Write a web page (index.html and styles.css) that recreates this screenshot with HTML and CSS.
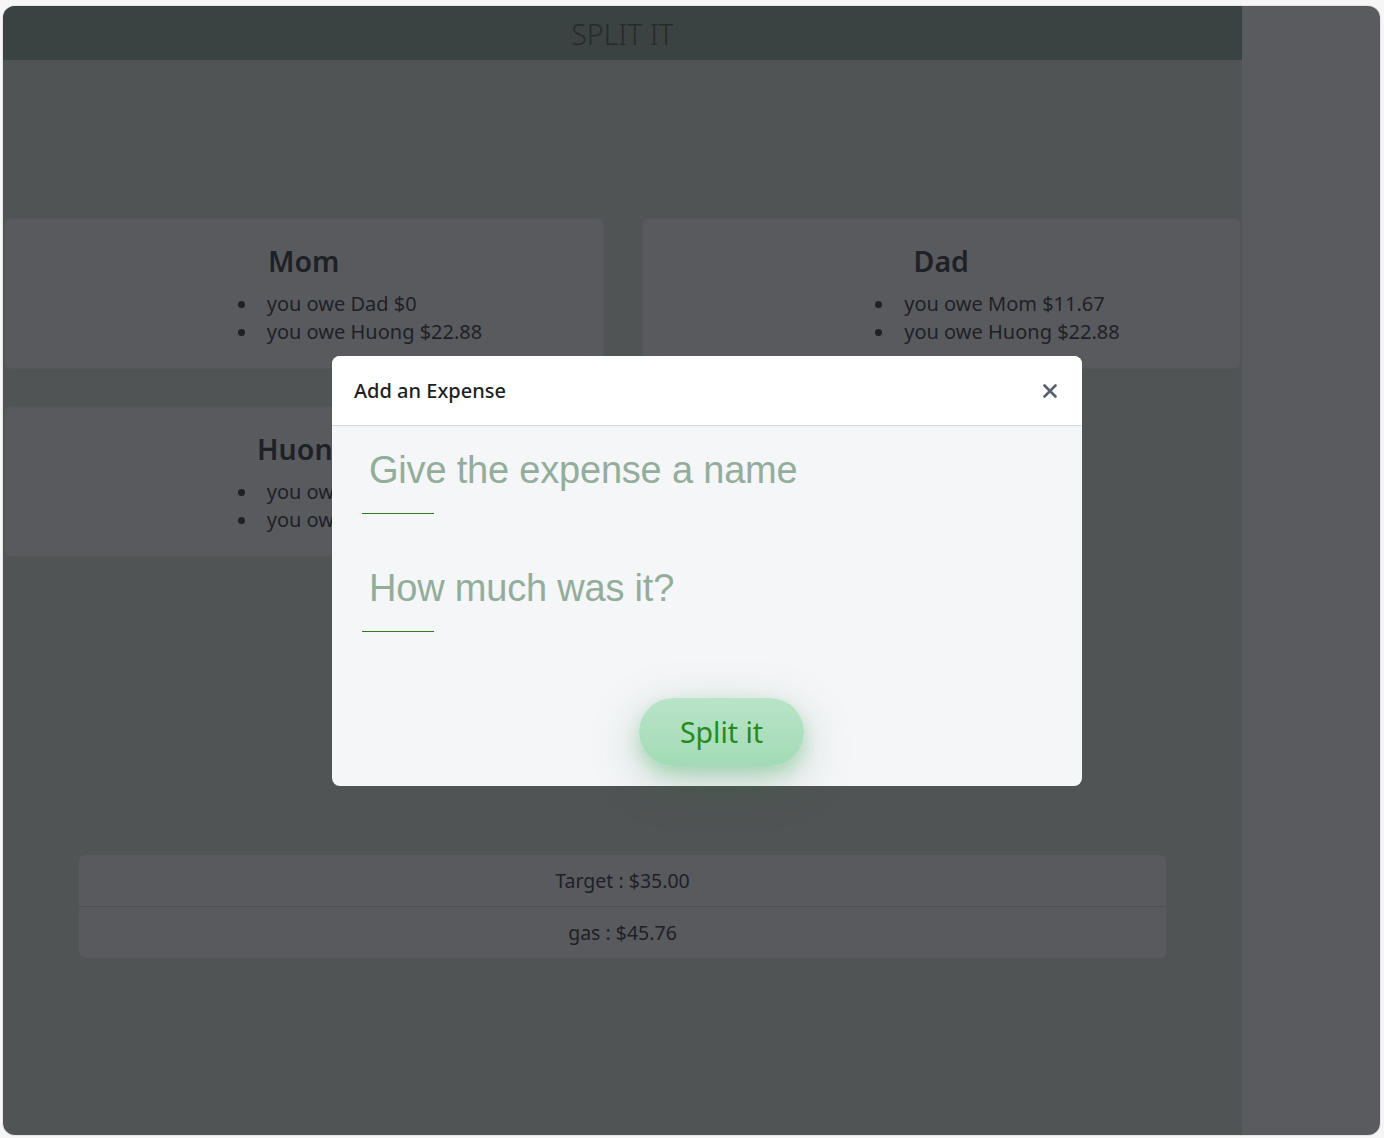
FILE: index.html
```html
<!DOCTYPE html>
<html lang="en">
<head>
<meta charset="utf-8">
<title>Split It</title>
<link rel="stylesheet" href="styles.css">
</head>
<body>
<div class="window">
  <div class="app">
    <header class="app-header">SPLIT IT</header>
    <main class="content">
      <section class="cards">
        <article class="card">
          <h2 class="card-title">Mom</h2>
          <ul class="debts">
            <li>you owe Dad $0</li>
            <li>you owe Huong $22.88</li>
          </ul>
        </article>
        <article class="card">
          <h2 class="card-title">Dad</h2>
          <ul class="debts">
            <li>you owe Mom $11.67</li>
            <li>you owe Huong $22.88</li>
          </ul>
        </article>
        <article class="card">
          <h2 class="card-title">Huong</h2>
          <ul class="debts">
            <li>you owe Mom $11.67</li>
            <li>you owe Dad $0</li>
          </ul>
        </article>
      </section>
      <ul class="expenses">
        <li>Target : $35.00</li>
        <li>gas : $45.76</li>
      </ul>
    </main>
  </div>
  <aside class="side"></aside>

  <div class="modal">
    <div class="modal-header">
      <h3 class="modal-title">Add an Expense</h3>
      <button class="close" aria-label="Close">
        <svg width="14" height="14" viewBox="0 0 14 14"><path d="M1.5 1.5 L12.5 12.5 M12.5 1.5 L1.5 12.5" stroke="#58606d" stroke-width="2.6" stroke-linecap="round"/></svg>
      </button>
    </div>
    <div class="modal-body">
      <div class="field">
        <input class="field-input" type="text" placeholder="Give the expense a name">
        <div class="field-line"></div>
      </div>
      <div class="field">
        <input class="field-input" type="text" placeholder="How much was it?">
        <div class="field-line"></div>
      </div>
      <div class="actions">
        <button class="split-btn">Split it</button>
      </div>
    </div>
  </div>
</div>
</body>
</html>
```

FILE: styles.css
```css
* { box-sizing: border-box; }

html, body { margin: 0; }

body {
  background: #f6f6f6;
  padding: 6px 4px 3px 3px;
  font-family: "Noto Sans", "Open Sans", sans-serif;
}

.window {
  position: relative;
  display: flex;
  height: 1129px;
  border-radius: 12px;
  overflow: hidden;
  box-shadow: 0 0 0 1px #e4e4e4;
}

.app {
  width: 1239px;
  background: #505454;
  display: flex;
  flex-direction: column;
}

.side {
  flex: 1;
  background: #5a5b5f;
}

.app-header {
  height: 54px;
  background: #3a4341;
  color: #252b2a;
  font-size: 28.5px;
  font-weight: 300;
  display: flex;
  align-items: center;
  justify-content: center;
  padding-top: 2px;
}

.content {
  padding-top: 158px;
}

.cards {
  display: grid;
  grid-template-columns: 1fr 1fr;
  column-gap: 38px;
  row-gap: 37px;
  padding: 0 1px;
}

.card {
  height: 151px;
  background: #595a5e;
  border: 1px solid #54565a;
  border-radius: 6px;
  padding-top: 25px;
  text-align: center;
  color: #1e2125;
}

.card-title {
  margin: 0;
  font-size: 28.5px;
  font-weight: 600;
  line-height: 34px;
}

.debts {
  list-style: none;
  width: 154px;
  margin: 12px auto 0;
  padding-left: 40px;
  text-align: left;
  white-space: nowrap;
  font-size: 20px;
  line-height: 28px;
}

.debts li::before {
  content: "";
  display: inline-block;
  width: 7px;
  height: 7px;
  border-radius: 50%;
  background: #1e2125;
  margin-left: -29px;
  margin-right: 22px;
  vertical-align: 3px;
}

.expenses {
  list-style: none;
  margin: 298px 76px 0;
  padding: 0;
  background: #595a5e;
  border-radius: 6px;
  color: #1e2125;
  font-size: 19.5px;
}

.expenses li {
  height: 51px;
  display: flex;
  align-items: center;
  justify-content: center;
}

.expenses li + li {
  height: 52px;
  border-top: 1px solid #4d5053;
}

/* modal */
.modal {
  position: absolute;
  left: 329px;
  top: 350px;
  width: 750px;
  height: 430px;
  border-radius: 8px;
  background: #f5f6f8;
  display: flex;
  flex-direction: column;
}

.modal-header {
  height: 70px;
  background: #fff;
  border-bottom: 1px solid #d6d8db;
  border-radius: 8px 8px 0 0;
  display: flex;
  align-items: center;
  justify-content: space-between;
  padding: 0 25px 0 22px;
}

.modal-title {
  margin: 0;
  font-size: 20px;
  font-weight: 500;
  color: #1c1f23;
}

.close {
  border: 0;
  background: none;
  padding: 0;
  width: 14px;
  height: 14px;
  display: flex;
  cursor: pointer;
}

.modal-body {
  flex: 1;
  padding: 21px 30px 0;
}

.field + .field {
  margin-top: 51px;
}

.field-input {
  display: block;
  width: 100%;
  border: 0;
  background: transparent;
  padding: 0 7px;
  height: 46px;
  font-family: "Liberation Sans", Arial, sans-serif;
  font-size: 38px;
  letter-spacing: -0.2px;
  line-height: 46px;
  color: #2d3a31;
  outline: none;
}

.field-input::placeholder {
  color: #93ad9b;
}

.field-line {
  width: 72px;
  height: 1px;
  margin-top: 20px;
  background: #2f7a22;
}

.actions {
  display: flex;
  justify-content: center;
  padding-left: 29px;
  margin-top: 66px;
}

.split-btn {
  width: 165px;
  height: 68px;
  border: 0;
  border-radius: 34px;
  background: linear-gradient(#b8e4c8, #a3dbb6);
  color: #268a1d;
  font-family: "Noto Sans", "Open Sans", sans-serif;
  font-size: 28.5px;
  padding: 0;
  box-shadow: 0 8px 16px rgba(120, 205, 145, 0.45), 0 14px 50px rgba(40, 110, 60, 0.25);
  cursor: pointer;
}
```
